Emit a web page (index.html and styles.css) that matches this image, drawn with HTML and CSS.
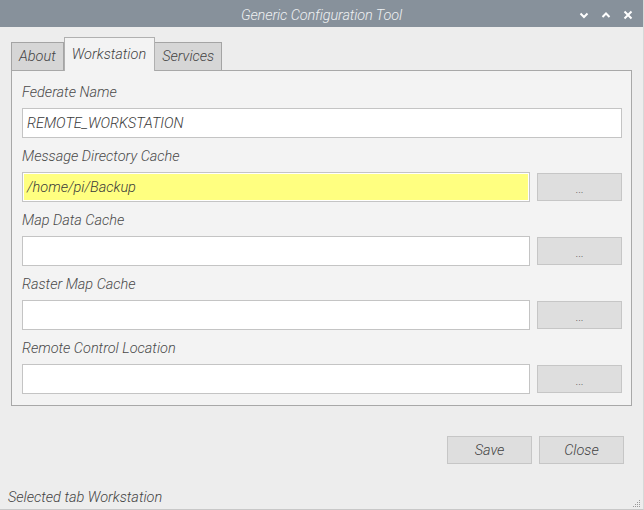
FILE: index.html
```html
<!DOCTYPE html>
<html>
<head>
<meta charset="utf-8">
<link rel="stylesheet" href="styles.css">
</head>
<body>
<div class="window">
  <div class="titlebar">
    <div class="title">Generic Configuration Tool</div>
    <div class="controls">
      <svg width="10" height="8" viewBox="0 0 10 8"><path d="M1.5 2.5 L5 6 L8.5 2.5" fill="none" stroke="#fff" stroke-width="2"/></svg>
      <svg width="10" height="8" viewBox="0 0 10 8"><path d="M1.5 6 L5 2.5 L8.5 6" fill="none" stroke="#fff" stroke-width="2"/></svg>
      <svg width="10" height="10" viewBox="0 0 10 10"><path d="M1.5 1.5 L8.5 8.5 M8.5 1.5 L1.5 8.5" fill="none" stroke="#fff" stroke-width="2"/></svg>
    </div>
  </div>
  <div class="content">
    <div class="tabs">
      <div class="tab">About</div>
      <div class="tab active">Workstation</div>
      <div class="tab">Services</div>
    </div>
    <div class="panel">
      <div class="field">
        <div class="label">Federate Name</div>
        <div class="row"><div class="input">REMOTE_WORKSTATION</div></div>
      </div>
      <div class="field">
        <div class="label">Message Directory Cache</div>
        <div class="row"><div class="input yellow">/home/pi/Backup</div><div class="browse">...</div></div>
      </div>
      <div class="field">
        <div class="label">Map Data Cache</div>
        <div class="row"><div class="input"></div><div class="browse">...</div></div>
      </div>
      <div class="field">
        <div class="label">Raster Map Cache</div>
        <div class="row"><div class="input"></div><div class="browse">...</div></div>
      </div>
      <div class="field">
        <div class="label">Remote Control Location</div>
        <div class="row"><div class="input"></div><div class="browse">...</div></div>
      </div>
    </div>
    <div class="actions">
      <div class="btn">Save</div>
      <div class="btn">Close</div>
    </div>
  </div>
  <div class="status">
    <span>Selected tab Workstation</span>
    <svg class="grip" width="10" height="10" viewBox="0 0 10 10" fill="#9a9a9a">
      <rect x="8" y="2" width="1" height="1"/>
      <rect x="6" y="4" width="1" height="1"/><rect x="8" y="4" width="1" height="1"/>
      <rect x="4" y="6" width="1" height="1"/><rect x="6" y="6" width="1" height="1"/><rect x="8" y="6" width="1" height="1"/>
      <rect x="2" y="8" width="1" height="1"/><rect x="4" y="8" width="1" height="1"/><rect x="6" y="8" width="1" height="1"/><rect x="8" y="8" width="1" height="1"/>
    </svg>
  </div>
</div>
</body>
</html>
```
FILE: styles.css
```css
html, body {
  margin: 0;
  padding: 0;
}
body {
  width: 644px;
  height: 510px;
  overflow: hidden;
  font-family: Roboto, "Liberation Sans", sans-serif;
  font-style: italic;
  font-weight: 300;
  font-size: 14.5px;
  color: #3a3a3a;
}
.window {
  width: 644px;
  height: 510px;
  box-sizing: border-box;
  background: #ededed;
  border-bottom: 1px solid #c8c8c8;
  border-right: 1px solid #d8d8d8;
  display: flex;
  flex-direction: column;
}
.titlebar {
  height: 27px;
  flex: none;
  background: #87919b;
  display: flex;
  align-items: center;
  position: relative;
}
.title {
  flex: 1;
  text-align: center;
  color: #eef0f2;
  font-size: 14.5px;
  letter-spacing: -0.1px;
  padding-top: 3px;
}
.controls {
  position: absolute;
  right: 10px;
  top: 10px;
  display: flex;
  gap: 12px;
  align-items: center;
}
.content {
  padding: 10px 11px 0 11px;
  flex: 1;
  display: flex;
  flex-direction: column;
}
.tabs {
  display: flex;
  align-items: flex-end;
  height: 33px;
}
.tab {
  height: 28px;
  box-sizing: border-box;
  border: 1px solid #a4a4a4;
  border-bottom: none;
  background: #d6d6d6;
  padding: 0 7px;
  line-height: 28px;
  color: #444;
}
.tab.active {
  height: 34px;
  background: #f3f3f3;
  margin-bottom: -1px;
  position: relative;
  z-index: 1;
  padding: 0 8px 0 7px;
  line-height: 34px;
  border-color: #b0b0b0;
}
.tab.active + .tab {
  border-left: none;
}
.panel {
  height: 336px;
  box-sizing: border-box;
  border: 1px solid #a8a8a8;
  background: #f3f3f3;
  padding: 11px 9px 0 10px;
  display: flex;
  flex-direction: column;
  gap: 8px;
}
.field {
  display: flex;
  flex-direction: column;
  gap: 6px;
}
.label {
  height: 20px;
  box-sizing: border-box;
  padding-top: 1px;
  line-height: 20px;
  color: #4a4a4a;
}
.row {
  display: flex;
  gap: 7px;
  align-items: center;
}
.input {
  flex: 1;
  height: 30px;
  box-sizing: border-box;
  background: #fff;
  border: 1px solid #c4c4c4;
  line-height: 28px;
  padding: 1px 0 0 4px;
  color: #3a3a3a;
}
.input.yellow {
  background: #ffff80;
  box-shadow: inset 0 0 0 1px #ffffff;
}
.browse {
  width: 85px;
  height: 28px;
  box-sizing: border-box;
  background: #dedede;
  border: 1px solid #c6c6c6;
  text-align: center;
  line-height: 26px;
  padding-top: 3px;
  font-size: 11px;
  color: #555;
  font-style: normal;
}
.actions {
  display: flex;
  justify-content: flex-end;
  gap: 7px;
  margin-top: 30px;
  padding-right: 8px;
}
.btn {
  width: 85px;
  height: 28px;
  box-sizing: border-box;
  background: #dedede;
  border: 1px solid #c6c6c6;
  text-align: center;
  line-height: 27px;
  color: #444;
}
.status {
  height: 31px;
  flex: none;
  display: flex;
  align-items: flex-start;
  padding: 10px 0 0 8px;
  box-sizing: border-box;
  position: relative;
}
.status span {
  line-height: 20px;
  color: #444;
}
.grip {
  position: absolute;
  right: 2px;
  bottom: 1px;
}
```
